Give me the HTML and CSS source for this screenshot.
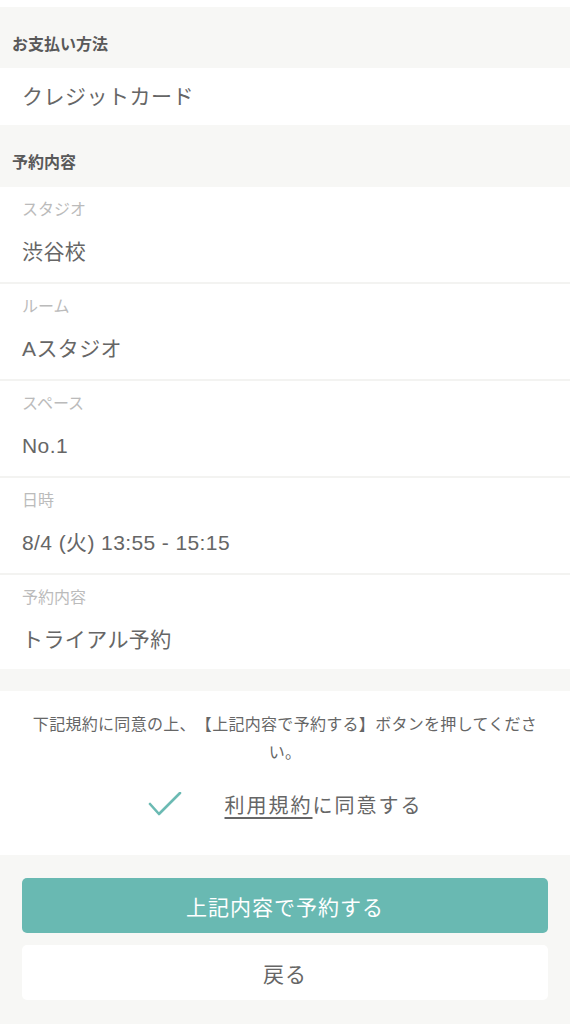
FILE: index.html
```html
<!DOCTYPE html>
<html lang="ja">
<head>
    <meta charset="UTF-8">
    <title>予約内容の確認</title>
    <meta name="viewport" content="width=device-width, initial-scale=1.0">
    <link rel="stylesheet" href="styles.css">
</head>
<body>
    <div class="top-bar"></div>

    <h2 class="section-title">お支払い方法</h2>
    <div class="payment-row">クレジットカード</div>

    <h2 class="section-title section-title-second">予約内容</h2>
    <div class="detail-list">
        <div class="detail-row">
            <p class="detail-label">スタジオ</p>
            <p class="detail-value">渋谷校</p>
        </div>
        <div class="detail-row">
            <p class="detail-label">ルーム</p>
            <p class="detail-value">Aスタジオ</p>
        </div>
        <div class="detail-row">
            <p class="detail-label">スペース</p>
            <p class="detail-value">No.1</p>
        </div>
        <div class="detail-row">
            <p class="detail-label">日時</p>
            <p class="detail-value">8/4 (火) 13:55 - 15:15</p>
        </div>
        <div class="detail-row">
            <p class="detail-label">予約内容</p>
            <p class="detail-value">トライアル予約</p>
        </div>
    </div>

    <div class="spacer"></div>

    <div class="terms">
        <p class="terms-text">下記規約に同意の上、【上記内容で予約する】ボタンを押してください。</p>
        <label class="agree-row">
            <svg class="check-icon" width="34" height="24" viewBox="0 0 34 24">
                <path d="M2 12 L11 22 L32 1" fill="none" stroke="#6bbab3" stroke-width="2.6" stroke-linecap="round" stroke-linejoin="round"/>
            </svg>
            <span class="agree-text"><span class="terms-link">利用規約</span>に同意する</span>
        </label>
    </div>

    <div class="actions">
        <button class="submit-button">上記内容で予約する</button>
        <button class="back-button">戻る</button>
    </div>
</body>
</html>
```

FILE: styles.css
```css
* {
    margin: 0;
    padding: 0;
    box-sizing: border-box;
    font-family: 'Liberation Sans', 'Noto Sans CJK JP', sans-serif;
}

body {
    background: #f7f7f5;
    color: #666;
    text-spacing-trim: space-all;
}

.top-bar {
    height: 7px;
    background: #fff;
}

.section-title {
    font-size: 16px;
    font-weight: bold;
    line-height: 22px;
    color: #595959;
    padding: 27px 12px 12px;
}

.section-title-second {
    padding-bottom: 13px;
}

.payment-row {
    background: #fff;
    height: 57px;
    line-height: 57px;
    padding: 0 22px;
    font-size: 21px;
    letter-spacing: 0.5px;
    color: #666;
}

.detail-list {
    background: #fff;
}

.detail-row {
    padding: 13px 22px 16px;
    height: 97px;
    border-bottom: 2px solid #f3f3f1;
}

.detail-row:last-child {
    border-bottom: none;
    height: 94px;
}

.detail-label {
    font-size: 16px;
    line-height: 20px;
    color: #bbb;
}

.detail-value {
    margin-top: 18px;
    font-size: 21px;
    line-height: 28px;
    letter-spacing: 0.4px;
    color: #666;
}

.spacer {
    height: 22px;
}

.terms {
    background: #fff;
    padding: 20px 0 31px;
}

.terms-text {
    padding: 0 30px;
    font-size: 16px;
    line-height: 28px;
    letter-spacing: 0.3px;
    text-align: center;
    color: #666;
}

.agree-row {
    display: flex;
    justify-content: center;
    align-items: center;
    gap: 43px;
    height: 40px;
    margin-top: 17px;
}

.agree-text {
    font-size: 20px;
    letter-spacing: 2px;
    color: #666;
}

.terms-link {
    text-decoration: underline;
    text-underline-offset: 4px;
}

.actions {
    display: flex;
    flex-direction: column;
    gap: 12px;
    padding: 23px 22px 24px;
}

.submit-button,
.back-button {
    height: 55px;
    border: none;
    border-radius: 5px;
    font-size: 21px;
    letter-spacing: 1px;
    cursor: pointer;
}

.submit-button {
    background: #69b9b2;
    color: #fff;
}

.back-button {
    background: #fff;
    color: #666;
}
```
